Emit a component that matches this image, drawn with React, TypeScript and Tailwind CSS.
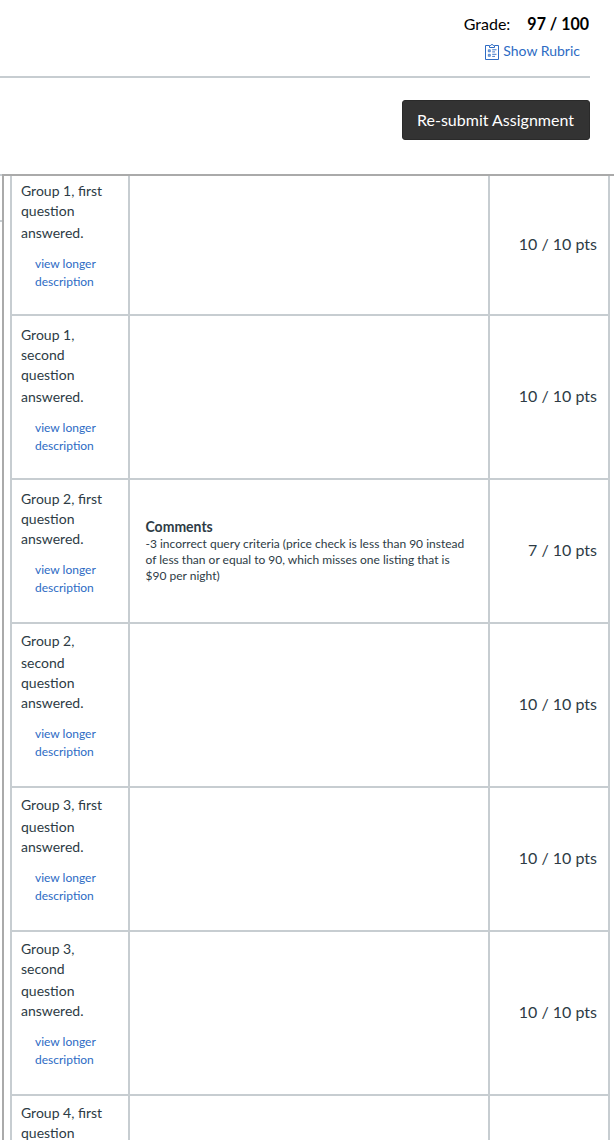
type Line = { text: string; h: string };
type Criterion = { lines: Line[]; height: string; pad: string; points: string; pointsPad: string; comment?: string[]; clipped?: boolean };

const N = "h-[20px]";
const T = "h-[22px]";

const criteria: Criterion[] = [
  { lines: [{ text: "Group 1, first", h: N }, { text: "question", h: T }, { text: "answered.", h: N }], height: "h-[140px]", pad: "pt-[5px]", points: "10 / 10 pts", pointsPad: "pt-[56px]" },
  { lines: [{ text: "Group 1,", h: N }, { text: "second", h: N }, { text: "question", h: T }, { text: "answered.", h: N }], height: "h-[164px]", pad: "pt-[9px]", points: "10 / 10 pts", pointsPad: "pt-[68px]" },
  { lines: [{ text: "Group 2, first", h: N }, { text: "question", h: N }, { text: "answered.", h: N }], height: "h-[144px]", pad: "pt-[9px]", points: "7 / 10 pts", pointsPad: "pt-[58px]", comment: ["-3 incorrect query criteria (price check is less than 90 instead", "of less than or equal to 90, which misses one listing that is", "$90 per night)"] },
  { lines: [{ text: "Group 2,", h: T }, { text: "second", h: N }, { text: "question", h: N }, { text: "answered.", h: N }], height: "h-[164px]", pad: "pt-[7px]", points: "10 / 10 pts", pointsPad: "pt-[68px]" },
  { lines: [{ text: "Group 3, first", h: T }, { text: "question", h: N }, { text: "answered.", h: N }], height: "h-[144px]", pad: "pt-[7px]", points: "10 / 10 pts", pointsPad: "pt-[58px]" },
  { lines: [{ text: "Group 3,", h: N }, { text: "second", h: T }, { text: "question", h: N }, { text: "answered.", h: N }], height: "h-[164px]", pad: "pt-[7px]", points: "10 / 10 pts", pointsPad: "pt-[68px]" },
  { lines: [{ text: "Group 4, first", h: N }, { text: "question", h: N }], height: "h-[44px]", pad: "pt-[7px]", points: "", pointsPad: "pt-0", clipped: true },
];

function RubricIcon() {
  return (
    <svg className="mt-px h-[16px] w-[14px] shrink-0" viewBox="0 0 14 16" fill="none" stroke="#2d6bc4" strokeWidth="1">
      <path d="M4 1.5H.5v14h13v-14H10" />
      <path d="M4.5 3.5v-2h1.2C5.8.8 6.3.5 7 .5s1.2.3 1.3 1h1.2v2z" />
      <path d="M3.3 5.8h2v2h-2zM3.3 10.3h2v2h-2z" fill="#2d6bc4" fillOpacity=".5" strokeWidth=".7" />
      <path d="M7.2 5.8h4.3M7.2 7.9h2.8M7.2 10.3h4.3M7.2 12.4h2.8" strokeWidth=".9" />
    </svg>
  );
}

function Row({ c }: { c: Criterion }) {
  return (
    <div className={`flex overflow-hidden ${c.height} ${c.clipped ? "" : "border-b-2 border-[#c7cdd1]"}`}>
      <div className={`w-[118px] shrink-0 border-r-2 border-[#c7cdd1] pl-[9px] ${c.pad}`}>
        <div className="text-[14px] leading-[20px]">
          {c.lines.map((l) => (
            <div key={l.text} className={`whitespace-nowrap ${l.h}`}>{l.text}</div>
          ))}
        </div>
        {!c.clipped && (
          <a href="#" className="mt-[12px] block w-[90px] pl-[14px] text-[12px] leading-[18px] text-[#2d6bc4]">
            view longer description
          </a>
        )}
      </div>
      <div className="w-[360px] shrink-0 border-r-2 border-[#c7cdd1] pl-[15.5px]">
        {c.comment && (
          <div className="pt-[36px]">
            <div className="h-[20px] text-[14px] leading-[20px] font-bold"><span className="inline-block origin-left scale-y-[1.1]">Comments</span></div>
            <div className="text-[12px] leading-[16px] whitespace-nowrap">
              {c.comment.map((t) => <div key={t}>{t}</div>)}
            </div>
          </div>
        )}
      </div>
      <div className={`flex-1 pr-[11px] text-right text-[16px] leading-[24px] whitespace-nowrap ${c.pointsPad}`}>{c.points}</div>
    </div>
  );
}

export default function App() {
  return (
    <div className="flex h-[1140px] w-[616px] flex-col overflow-hidden bg-white font-['Lato',sans-serif] text-[#2d3b45]">
      <header className="flex h-[78px] w-[590px] shrink-0 flex-col items-end border-b-2 border-[#c7cdd1] pt-[12px]">
        <div className="flex gap-[17px] text-[16px] leading-[24px] text-black">
          <span>Grade:</span>
          <span className="inline-block scale-y-[1.06] pr-px font-bold">97 / 100</span>
        </div>
        <a href="#" className="mt-[5px] mr-[10px] flex items-center gap-[4px] text-[14px] leading-[20px] text-[#2d6bc4]">
          <RubricIcon />
          Show Rubric
        </a>
      </header>
      <div className="flex h-[96px] w-[590px] shrink-0 justify-end pt-[22px]">
        <button className="h-[40px] w-[188px] rounded-[3px] border border-[#2a2a2a] bg-[#333333] pr-px text-[16px] leading-[24px] text-white">
          Re-submit Assignment
        </button>
      </div>
      <div className="flex flex-1">
        <div className="flex w-[2px] flex-col">
          <div className="h-[48px] border-y-2 border-[#c7cdd1]" />
        </div>
        <main className="w-[612px] border-t-2 border-l-2 border-[#aaaaaa] pl-[6px]">
          <div className="w-[600px] border-x-2 border-[#c7cdd1]">
            {criteria.map((c) => <Row key={c.lines.map((l) => l.text).join(" ")} c={c} />)}
          </div>
        </main>
      </div>
    </div>
  );
}
